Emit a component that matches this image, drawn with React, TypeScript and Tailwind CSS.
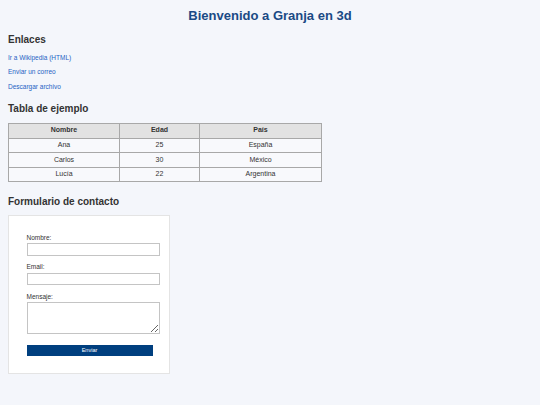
import React from 'react';

const rows = [
  { nombre: 'Ana', edad: 25, pais: 'España' },
  { nombre: 'Carlos', edad: 30, pais: 'México' },
  { nombre: 'Lucía', edad: 22, pais: 'Argentina' },
];

const links = ['Ir a Wikipedia (HTML)', 'Enviar un correo', 'Descargar archivo'];

const App: React.FC = () => {
  return (
    <div className="min-h-[405px] bg-[#f4f6fb] px-[8px] pt-[8px] pb-[20px] font-['Liberation_Sans',Arial,sans-serif] text-[#333]">
      {/* Header */}
      <h1 className="text-center text-[13px] leading-[15px] font-bold text-[#1a4a85]">Bienvenido a Granja en 3d</h1>

      {/* Links */}
      <h2 className="mt-[11px] text-[10px] leading-[12px] font-bold text-[#333]">Enlaces</h2>
      <ul className="mt-[7.5px] flex flex-col gap-[7px]">
        {links.map((l) => (
          <li key={l} className="text-[6.5px] leading-[7.5px]">
            <a href="#" className="text-[#2563c4]">{l}</a>
          </li>
        ))}
      </ul>

      {/* Table */}
      <h2 className="mt-[13px] text-[10px] leading-[12px] font-bold text-[#333]">Tabla de ejemplo</h2>
      <table className="mt-[7.5px] w-[314px] border-collapse text-[7px] text-[#333]">
        <thead>
          <tr className="h-[15px] bg-[#e2e2e2]">
            <th className="w-[111px] border border-[#a8a8a8] font-bold">Nombre</th>
            <th className="w-[80px] border border-[#a8a8a8] font-bold">Edad</th>
            <th className="border border-[#a8a8a8] font-bold">País</th>
          </tr>
        </thead>
        <tbody>
          {rows.map((r) => (
            <tr key={r.nombre} className="h-[14.5px] bg-[#f8f9fc]">
              <td className="border border-[#a8a8a8] text-center">{r.nombre}</td>
              <td className="border border-[#a8a8a8] text-center">{r.edad}</td>
              <td className="border border-[#a8a8a8] text-center">{r.pais}</td>
            </tr>
          ))}
        </tbody>
      </table>

      {/* Form */}
      <h2 className="mt-[13.5px] text-[10px] leading-[12px] font-bold text-[#333]">Formulario de contacto</h2>
      <form className="mt-[7.5px] w-[162px] border border-[#e4e4e4] bg-white px-[17.5px] pt-[17.5px] pb-[16.5px]" onSubmit={(e) => e.preventDefault()}>
        <label className="block h-[8px] text-[6.5px] leading-[8px]">Nombre:</label>
        <input type="text" className="mt-[1.5px] mb-[7.5px] block h-[12.5px] w-[133px] border border-[#c4c4c4] bg-white" />
        <label className="block h-[8px] text-[6.5px] leading-[8px]">Email:</label>
        <input type="email" className="mt-[1.5px] mb-[7.5px] block h-[12.5px] w-[133px] border border-[#c4c4c4] bg-white" />
        <label className="block h-[8px] text-[6.5px] leading-[8px]">Mensaje:</label>
        <textarea className="mt-[1.5px] block h-[31.5px] w-[133px] border border-[#c4c4c4] bg-white" />
        <button type="submit" className="mt-[11px] block h-[11.5px] w-[126px] bg-[#003f7f] text-[5.5px] leading-[11.5px] text-white">
          Enviar
        </button>
      </form>
    </div>
  );
};

export default App;
